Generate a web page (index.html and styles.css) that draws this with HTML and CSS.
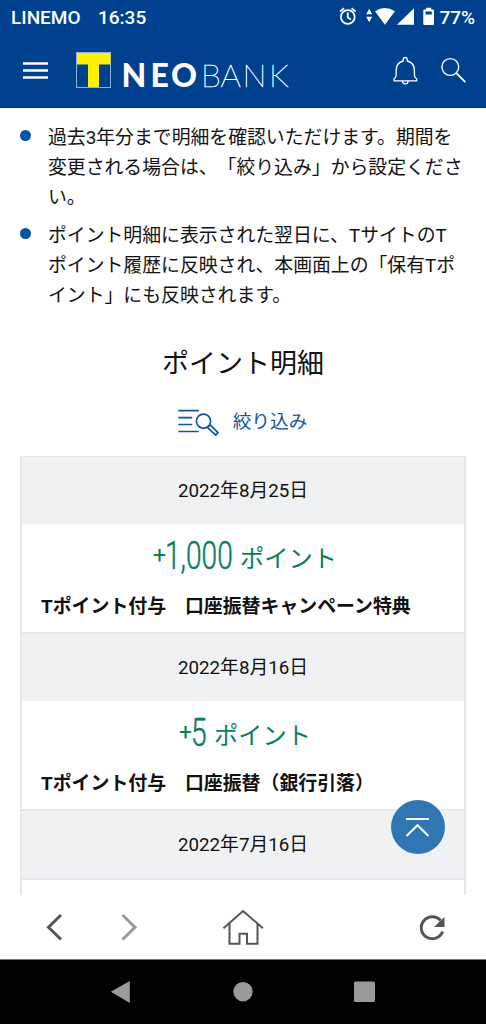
FILE: index.html
```html
<!DOCTYPE html>
<html lang="ja">
<head>
<meta charset="utf-8">
<meta name="viewport" content="width=device-width">
<title>ポイント明細</title>
<link rel="stylesheet" href="styles.css">
</head>
<body>
<div class="screen">
  <div class="status">
    <span class="carrier">LINEMO</span>
    <span class="clock">16:35</span>
    <svg class="status-icons" width="98" height="24" viewBox="338 5 98 24">
      <g fill="none" stroke="#fff" stroke-width="1.8">
        <circle cx="347.8" cy="17" r="6.9"/>
        <path d="M347.8 12.6v4.8l3 2.1M340 11.6l4-3.3M355.600 11.6l-4-3.3"/>
      </g>
      <g fill="#fff">
        <path d="M366.200 14.200l3-5.400 3 5.400zM366.200 16.800l3 5.400 3-5.400z"/>
        <path d="M375 11.300Q384.900 4.700 394.900 11.300L384.900 24.700z"/>
        <path d="M397 24.700L414 8.200v16.500z"/>
        <path fill-rule="evenodd" d="M426.200 7.800h5v1.700h1.800q1 0 1 1v13.600q0 1-1 1h-8.700q-1 0-1-1V10.500q0-1 1-1h1.900zM425.500 11.500v3h6.300v-3z"/>
      </g>
    </svg>
    <span class="battery">77%</span>
  </div>
  <header class="header">
    <svg class="menu" width="25" height="18" viewBox="0 0 25 18" stroke="#fff" stroke-width="2.500"><path d="M0 1.500h25M0 8.500h25M0 15.500h25"/></svg>
    <svg class="logo" width="214" height="44" viewBox="76 50 214 44">
      <rect x="76.500" y="52.500" width="34" height="35" fill="#00418f" stroke="#8cb1dc"/>
      <path fill="#fff100" d="M77 53h33.500v11.500H99V87H88V64.500H77z"/>
      <text class="neo" x="121.500 150.500 171" y="86.500">NEO</text>
      <text class="bank" x="201 220.500 242.500 269" y="86.500">BANK</text>
    </svg>
    <svg class="bell" width="26" height="30" viewBox="392 55 26 30" fill="none" stroke="#fff" stroke-width="1.300" stroke-linejoin="round">
      <path d="M403.200 60v-1.500a2 2 0 0 1 4 0V60c5 1.200 7.200 4.700 7.200 9.500 0 5.200-.2 6.800 2.300 8.300v2H394v-2c2.500-1.500 2.200-3.100 2.200-8.300 0-4.800 2-8.300 7-9.500zM402.300 80a2.900 2.900 0 0 0 5.800 0"/>
    </svg>
    <svg class="search" width="27" height="27" viewBox="440 57 27 27" fill="none" stroke="#fff" stroke-width="1.400"><circle cx="450.300" cy="67" r="8.400"/><path d="M456.300 73.200l9 9" stroke-width="1.800"/></svg>
  </header>
  <main class="content">
    <ul class="notes">
      <li>過去3年分まで明細を確認いただけます。期間を<br>変更される場合は、「絞り込み」から設定くださ<br>い。</li>
      <li>ポイント明細に表示された翌日に、TサイトのT<br>ポイント履歴に反映され、本画面上の「保有Tポ<br>イント」にも反映されます。</li>
    </ul>
    <h1 class="title">ポイント明細</h1>
    <div class="filter">
      <svg width="42" height="28" viewBox="177 407 42 28" fill="none" stroke="#10579c" stroke-width="1.700">
        <path d="M178.300 409.700h20.500M178.300 416.600h14M178.300 423.500h14M178.300 430.500h20.500"/>
        <circle cx="203.500" cy="420.200" r="7.100"/>
        <path d="M207.400 426.300l8.300 7.800 2.300-2.500-8-7.700z" stroke-linejoin="round"/>
      </svg>
      <span>絞り込み</span>
    </div>
    <div class="history">
      <div class="date">2022年8月25日</div>
      <div class="entry">
        <div class="amount"><span class="plus">+</span><svg class="num" width="68" height="36"><text transform="translate(0 31) scale(.74 1)">1,000</text></svg><span class="unit">ポイント</span></div>
        <div class="desc">Tポイント付与　口座振替キャンペーン特典</div>
      </div>
      <div class="date">2022年8月16日</div>
      <div class="entry">
        <div class="amount"><span class="plus">+</span><svg class="num" width="16" height="36"><text transform="translate(0 31) scale(.74 1)">5</text></svg><span class="unit">ポイント</span></div>
        <div class="desc">Tポイント付与　口座振替（銀行引落）</div>
      </div>
      <div class="date last">2022年7月16日</div>
      <div class="entry"></div>
    </div>
    <div class="to-top">
      <svg width="54" height="54" viewBox="0 0 54 54" fill="none" stroke="#fff" stroke-width="2"><path d="M15 19h23M15.500 36l11-10.800 11 10.800"/></svg>
    </div>
  </main>
  <nav class="toolbar">
    <svg width="486" height="64" viewBox="0 895 486 64" fill="none" stroke="#555">
      <path d="M61 915L48.500 927.200 61 939.500" stroke-width="3"/>
      <path d="M122.500 915L135 927.200 122.500 939.500" stroke-width="3" stroke="#999"/>
      <path d="M223.500 928.300L243 911l20 17.300M229.500 923v20.700h10v-10h7.500v10h10.500V923" stroke-width="2"/>
      <path d="M440.600 920.500A11 11 0 1 0 442.600 931.500" stroke-width="3"/>
      <path d="M444.500 917v10H434z" fill="#555" stroke="none"/>
    </svg>
  </nav>
  <div class="system">
    <svg width="486" height="65" viewBox="0 959 486 65" fill="#9a9a9a">
      <path d="M110.800 990.800L129.800 980v22z"/>
      <circle cx="243" cy="990.700" r="9.700"/>
      <rect x="354" y="980.500" width="21" height="20.500" rx="1.500"/>
    </svg>
  </div>
</div>
</body>
</html>
```
FILE: styles.css
```css
* { box-sizing: border-box; }
body {
  margin: 0;
  background: #fff;
  color: #111;
  font-family: Roboto, "Noto Sans CJK JP", sans-serif;
  text-spacing-trim: space-all;
}
svg { display: block; flex: none; }
.screen {
  width: 486px;
  height: 1024px;
  display: flex;
  flex-direction: column;
  overflow: hidden;
}
.status {
  height: 34px;
  flex: none;
  display: flex;
  align-items: center;
  padding: 0 11px;
  background: #00418f;
  color: #fff;
  font-size: 19px;
  font-weight: 500;
  white-space: nowrap;
}
.carrier { width: 87px; }
.status-icons { margin-left: auto; }
.battery { width: 39px; text-align: right; }
.header {
  height: 74px;
  flex: none;
  display: flex;
  align-items: center;
  padding: 0 20px 0 23px;
  background: #00418f;
  border-bottom: 1px solid #003681;
}
.logo { margin-left: 28px; margin-top: 2px; }
.bell { margin-left: 102px; }
.search { margin-left: 22px; }
.neo, .bank { font-family: Lato, sans-serif; fill: #fff; font-size: 32px; }
.neo { font-weight: 900; }
.bank { font-weight: 100; stroke: #fff; stroke-width: .5px; }
.content {
  position: relative;
  flex: 1;
  min-height: 0;
  padding: 15px 20px 0;
  overflow: hidden;
}
.notes {
  margin: 0;
  padding: 0;
  list-style: none;
  font-size: 18.85px;
  line-height: 30px;
  white-space: nowrap;
}
.notes li {
  display: flow-root;
  position: relative;
  padding-left: 28px;
  margin-bottom: 8px;
}
.notes li::before {
  content: "";
  position: absolute;
  left: 0;
  top: 7px;
  width: 11px;
  height: 11px;
  border-radius: 50%;
  background: #0058a4;
}
.title {
  margin: 31px 0 0;
  font-size: 27px;
  font-weight: 400;
  line-height: 44px;
  text-align: center;
}
.filter {
  height: 44px;
  margin-top: 22px;
  padding-right: 2px;
  display: flex;
  justify-content: center;
  gap: 14px;
  color: #10579c;
  font-size: 18.7px;
  line-height: 29px;
}
.history {
  margin-top: 4px;
  border: 2px solid #e4e6e9;
  border-width: 1px 2px 0;
}
.date {
  height: 67px;
  background: #f0f1f3;
  font-size: 18.8px;
  line-height: 68px;
  text-align: center;
}
.date.last { height: 69px; border-bottom: 2px solid #e4e6e9; }
.entry {
  height: 110px;
  padding: 14px 19px 0;
  border-bottom: 2px solid #e4e6e9;
}
.amount {
  height: 39px;
  padding-left: 4px;
  display: flex;
  justify-content: center;
  color: #087f59;
}
.plus { width: 12px; font-size: 23px; line-height: 35px; }
.num { overflow: visible; fill: #087f59; font-size: 38px; font-weight: 300; stroke: #087f59; stroke-width: .5px; }
.unit { margin-left: 7px; font-size: 24.2px; line-height: 43px; }
.desc {
  margin-top: 14px;
  font-size: 18.9px;
  font-weight: 700;
  line-height: 31px;
  white-space: nowrap;
}
.to-top {
  position: absolute;
  left: 391px;
  top: 692px;
  width: 54px;
  height: 54px;
  border-radius: 50%;
  background: #2f76b2;
}
.toolbar { height: 64px; flex: none; background: #fff; }
.system { height: 65px; flex: none; background: #000; border-top: 1px solid #777; }
```
